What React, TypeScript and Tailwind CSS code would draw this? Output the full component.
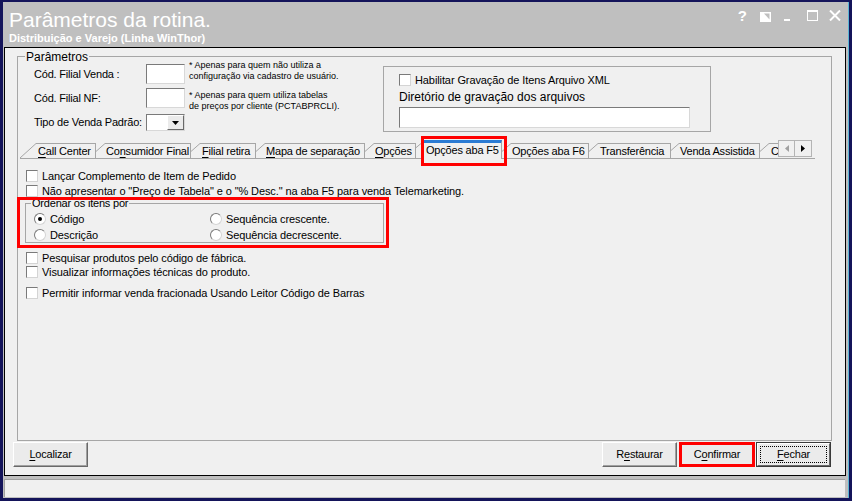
import React from 'react';

const U = ({ children }: { children: React.ReactNode }) => (
  <span className="underline underline-offset-2 decoration-1">{children}</span>
);

function Check({ label, className = '' }: { label: React.ReactNode; className?: string }) {
  return (
    <div className={'flex items-center h-[12px] ' + className}>
      <div className="w-[12px] h-[12px] shrink-0 bg-white border border-t-[#7a7a7a] border-l-[#7a7a7a] border-r-[#d4d4d4] border-b-[#d4d4d4]" />
      <span className="ml-[4px] leading-[13px] tracking-[-0.1px] whitespace-nowrap">{label}</span>
    </div>
  );
}

function Radio({ label, checked = false }: { label: string; checked?: boolean }) {
  return (
    <div className="flex items-center h-[12px]">
      <div className="w-[12px] h-[12px] shrink-0 rounded-full bg-white border border-t-[#7a7a7a] border-l-[#7a7a7a] border-r-[#d4d4d4] border-b-[#d4d4d4] flex items-center justify-center">
        {checked && <div className="w-[4px] h-[4px] rounded-full bg-black" />}
      </div>
      <span className="ml-[4px] leading-[13px] tracking-[-0.1px] whitespace-nowrap">{label}</span>
    </div>
  );
}

function Field({ className = '' }: { className?: string }) {
  return (
    <div className={'bg-white shrink-0 border border-t-[#7a7a7a] border-l-[#7a7a7a] border-r-[#d8d8d8] border-b-[#d8d8d8] ' + className} />
  );
}

function Btn({ children, className = '' }: { children: React.ReactNode; className?: string }) {
  return (
    <div className={'relative h-[25px] flex items-center justify-center bg-[#ebebeb] border border-t-white border-l-white border-r-[#696969] border-b-[#696969] shadow-[inset_-1px_-1px_0_#a0a0a0] leading-[13px] ' + className}>
      {children}
    </div>
  );
}

// visible top part of the slanted left edge of a tab
function Diag({ w }: { w: number }) {
  const y = w === 16 ? 15 : (w * 15) / 16;
  return (
    <svg width={w} height={15} viewBox={`0 0 ${w} 15`} className="shrink-0">
      <line x1={0} y1={y} x2={w} y2={0.5} stroke="#a6a6a6" strokeWidth={1} />
    </svg>
  );
}

type TabDef = { label: React.ReactNode; diag: number; box: string };

const leftTabs: TabDef[] = [
  { label: <><U>C</U>all Center</>, diag: 16, box: 'w-[60px] pl-[2px] border-r' },
  { label: <>Co<U>n</U>sumidor Final</>, diag: 9, box: 'w-[86px] pl-[1px] border-r' },
  { label: <><U>F</U>ilial retira</>, diag: 9, box: 'w-[56px] pl-[2px] border-r' },
  { label: <><U>M</U>apa de separação</>, diag: 9, box: 'w-[100px] pl-[1px] border-r' },
  { label: <><U>O</U>pções</>, diag: 9, box: 'w-[42px] pl-[1px] border-r' },
];

const rightTabs: TabDef[] = [
  { label: 'Opções aba F6', diag: 9, box: 'w-[78px] pl-[1px] border-r' },
  { label: 'Transferência', diag: 9, box: 'w-[73px] pl-[2px] border-r' },
  { label: 'Venda Assistida', diag: 8, box: 'w-[81px] pl-[1px] border-r' },
  { label: 'C', diag: 9, box: 'w-[9px] pl-[2px]' },
];

function Tab({ t }: { t: TabDef }) {
  return (
    <>
      <Diag w={t.diag} />
      <div className={'h-[15px] shrink-0 overflow-hidden whitespace-nowrap border-t border-[#a6a6a6] leading-[14px] ' + t.box}>
        {t.label}
      </div>
    </>
  );
}

function TitleIcons() {
  return (
    <div className="ml-auto flex items-start pt-[8px] pr-[7px]">
      <span className="-mt-[2px] text-[15px] leading-[15px] font-bold tracking-normal">?</span>
      <svg width="11" height="10" viewBox="0 0 11 10" className="ml-[13px] mt-[2px]">
        <rect x="0" y="0" width="11" height="10" fill="#fff" />
        <path d="M4 1.5 H9.5 V7.5 Z" fill="#bfbfbf" />
      </svg>
      <svg width="6" height="11" viewBox="0 0 6 11" className="ml-[13px]">
        <rect x="0" y="9" width="6" height="2" fill="#fff" />
      </svg>
      <svg width="11" height="11" viewBox="0 0 11 11" className="ml-[17px]">
        <rect x="0.5" y="0.5" width="10" height="10" fill="none" stroke="#fff" />
        <rect x="0" y="0" width="11" height="2" fill="#fff" />
      </svg>
      <svg width="12" height="11" viewBox="0 0 12 11" className="ml-[11px]">
        <path d="M1 0.5 L11 10.5 M11 0.5 L1 10.5" stroke="#fff" strokeWidth="2" />
      </svg>
    </div>
  );
}

export default function App() {
  return (
    <div className="w-[852px] h-[501px] bg-[#14145a] pt-[2px] px-[3px] pb-[3px] font-['Liberation_Sans',Arial,sans-serif] text-black text-[11px] tracking-[-0.2px]">
      <div className="h-full bg-[#bfbfbf] border-r border-[#5ab4d4] flex flex-col">
        {/* title bar */}
        <div className="h-[45px] shrink-0 flex text-white">
          <div className="pl-[6px] pt-[6px]">
            <div className="text-[21px] leading-[24px] tracking-normal">Parâmetros da rotina.</div>
            <div className="text-[11px] leading-[13px] font-bold tracking-normal">Distribuição e Varejo (Linha WinThor)</div>
          </div>
          <TitleIcons />
        </div>

        {/* main panel */}
        <div className="ml-px w-[842px] h-[429px] shrink-0 border border-black bg-[#f0f0f0] flex flex-col">
          <div className="relative ml-[12px] mt-[8px] w-[815px] h-[385px] shrink-0 border border-[#a6a6a6]">
            <span className="absolute left-[7px] -top-[7px] px-px bg-[#f0f0f0] text-[12px] leading-[14px] tracking-normal">Parâmetros</span>

            {/* top fields */}
            <div className="flex">
              <div className="w-[365px] pl-[16px] pt-[7px]">
                <div className="flex h-[20px]">
                  <div className="w-[112px] flex items-center">Cód. Filial Venda :</div>
                  <Field className="w-[39px] h-[20px]" />
                  <div className="ml-[4px] -mt-[4px] text-[9px] leading-[11px] tracking-normal whitespace-nowrap">
                    * Apenas para quem não utiliza a<br />configuração via cadastro de usuário.
                  </div>
                </div>
                <div className="flex h-[20px] mt-[4px]">
                  <div className="w-[112px] flex items-center">Cód. Filial NF:</div>
                  <Field className="w-[39px] h-[20px]" />
                  <div className="ml-[4px] mt-[2px] text-[9px] leading-[11px] tracking-normal whitespace-nowrap">
                    * Apenas para quem utiliza tabelas<br />de preços por cliente (PCTABPRCLI).
                  </div>
                </div>
                <div className="flex h-[17px] mt-[6px]">
                  <div className="w-[112px] flex items-center whitespace-nowrap">Tipo de Venda Padrão:</div>
                  <div className="w-[39px] h-[17px] bg-white border border-t-[#7a7a7a] border-l-[#7a7a7a] border-r-[#d8d8d8] border-b-[#d8d8d8] flex justify-end">
                    <div className="w-[17px] h-full bg-[#ebebeb] border border-t-white border-l-white border-r-[#696969] border-b-[#696969] flex items-center justify-center">
                      <svg width="7" height="4" viewBox="0 0 7 4">
                        <path d="M0 0 H7 L3.5 4 Z" fill="#000" />
                      </svg>
                    </div>
                  </div>
                </div>
              </div>

              <div className="mt-[9px] w-[328px] h-[66px] border border-[#a6a6a6] pl-[15px] pt-[7px]">
                <Check label="Habilitar Gravação de Itens Arquivo XML" />
                <div className="mt-[4px] text-[12px] leading-[14px] tracking-normal">Diretório de gravação dos arquivos</div>
                <Field className="mt-[3px] w-[291px] h-[21px]" />
              </div>
            </div>

            {/* tab strip */}
            <div className="relative mt-[8px] ml-[2px] w-[795px] h-[19px] flex items-end border-b border-[#a6a6a6]">
              {leftTabs.map((t, i) => (
                <Tab key={i} t={t} />
              ))}
              <Diag w={5} />
              <div className="relative z-10 -mb-px w-[81px] h-[19px] shrink-0 bg-[#f0f0f0] border-x border-[#a6a6a6] border-t-[3px] border-t-[#2b7bd3] pl-[4px] leading-[15px] whitespace-nowrap">
                Opções aba F5
              </div>
              {rightTabs.map((t, i) => (
                <Tab key={i} t={t} />
              ))}
              <div className="self-start flex shrink-0">
                <div className="w-[17px] h-[17px] bg-[#f0f0f0] border border-[#b4b4b4] flex items-center justify-center">
                  <svg width="4" height="7" viewBox="0 0 4 7">
                    <path d="M4 0 V7 L0 3.5 Z" fill="#a0a0a0" />
                  </svg>
                </div>
                <div className="w-[17px] h-[17px] bg-[#f0f0f0] border border-[#b4b4b4] border-l-0 flex items-center justify-center">
                  <svg width="4" height="7" viewBox="0 0 4 7">
                    <path d="M0 0 V7 L4 3.5 Z" fill="#000" />
                  </svg>
                </div>
              </div>
              <div className="absolute left-[401px] -top-[4px] w-[86px] h-[30px] border-[3px] border-[#ff0000] z-20" />
            </div>

            {/* tab page */}
            <Check className="ml-[8px] mt-[11px]" label="Lançar Complemento de Item de Pedido" />
            <Check
              className="ml-[8px] mt-[3px]"
              label={'Não apresentar o "Preço de Tabela" e o "% Desc." na aba F5 para venda Telemarketing.'}
            />

            <div className="relative ml-[7px] mt-[6px] w-[359px] h-[40px] border border-[#a6a6a6] pl-[8px] pt-[9px]">
              <span className="absolute left-[5px] -top-[7px] px-px bg-[#f0f0f0] leading-[13px] whitespace-nowrap">Ordenar os itens por</span>
              <div className="grid grid-cols-[176px_auto] gap-y-[4px]">
                <Radio label="Código" checked />
                <Radio label="Sequência crescente." />
                <Radio label="Descrição" />
                <Radio label="Sequência decrescente." />
              </div>
              <div className="absolute -left-[9px] -top-[7px] -right-[6px] -bottom-[6px] border-[3px] border-[#ff0000]" />
            </div>

            <Check className="ml-[8px] mt-[9px]" label="Pesquisar produtos pelo código de fábrica." />
            <Check className="ml-[8px] mt-[2px]" label="Visualizar informações técnicas do produto." />
            <Check className="ml-[8px] mt-[9px]" label="Permitir informar venda fracionada Usando Leitor Código de Barras" />
          </div>

          {/* buttons */}
          <div className="flex mt-px">
            <Btn className="ml-[8px] w-[75px]">
              <span><U>L</U>ocalizar</span>
            </Btn>
            <Btn className="ml-auto w-[75px]">
              <span>R<U>e</U>staurar</span>
            </Btn>
            <Btn className="ml-[2px] w-[76px]">
              <span>C<U>o</U>nfirmar</span>
              <div className="absolute -inset-px border-[3px] border-[#ff0000]" />
            </Btn>
            <div className="ml-px mr-[14px] w-[75px] h-[25px] border border-[#3a3a3a]">
              <div className="relative h-full flex items-center justify-center bg-[#ebebeb] border border-t-white border-l-white border-r-[#696969] border-b-[#696969] leading-[13px]">
                <span><U>F</U>echar</span>
                <div className="absolute inset-[2px] border border-dotted border-black" />
              </div>
            </div>
          </div>
        </div>

        {/* status bar */}
        <div className="ml-px mt-[3px] w-[841px] h-[18px] shrink-0 bg-[#f0f0f0] border-t border-l border-[#a0a0a0]" />
      </div>
    </div>
  );
}
